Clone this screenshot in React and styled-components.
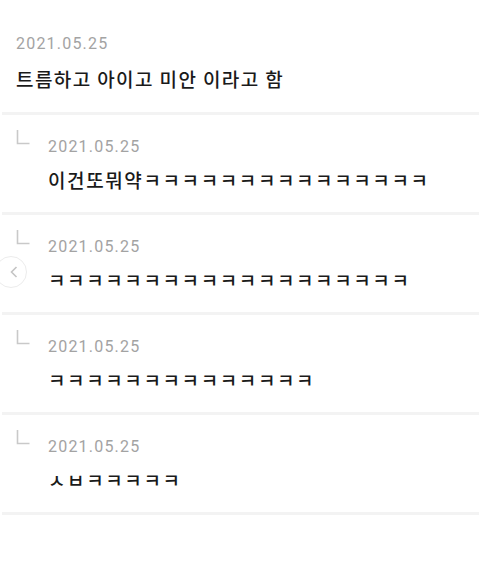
import React from 'react'
import styled, { createGlobalStyle } from 'styled-components'

const Global = createGlobalStyle`
  html, body {
    margin: 0;
    padding: 0;
    background: #ffffff;
  }
  body {
    font-family: "Noto Sans CJK KR", "Noto Sans", sans-serif;
  }
`

const Page = styled.div`
  position: relative;
  width: 479px;
  min-height: 587px;
  background: #fff;
  overflow: hidden;
`

const Comment = styled.div`
  padding: 34px 16px 20px 16px;
  display: flex;
  flex-direction: column;
  gap: 12px;
`

const Date = styled.div`
  font-family: Roboto, "Liberation Sans", sans-serif;
  font-size: 16px;
  line-height: 20px;
  letter-spacing: 1.2px;
  color: #a3a3a3;
`

const Text = styled.div`
  font-family: "Noto Sans CJK KR", sans-serif;
  font-size: 19px;
  line-height: 26px;
  letter-spacing: ${p => p.$spacing || 1.5}px;
  font-weight: 500;
  color: #1a1a1a;
  white-space: nowrap;
`

const Divider = styled.div`
  height: 3px;
  margin-left: 2px;
  background: #f3f3f3;
`

const Reply = styled.div`
  display: flex;
  padding: 14px 16px 19px 16px;
`

const Corner = styled.svg`
  flex: none;
  width: 14px;
  height: 16px;
  margin-right: 18px;
`

const Body = styled.div`
  display: flex;
  flex-direction: column;
  gap: 10px;
  padding-top: 8px;
`

const BackButton = styled.div`
  position: absolute;
  left: -5px;
  top: 256px;
  width: 32px;
  height: 32px;
  border-radius: 50%;
  background: #fff;
  border: 1.5px solid #ececec;
  display: flex;
  align-items: center;
  justify-content: center;
  padding-left: 6px;
  box-sizing: border-box;
`

const replies = [
  '이건또뭐약ㅋㅋㅋㅋㅋㅋㅋㅋㅋㅋㅋㅋㅋㅋㅋ',
  'ㅋㅋㅋㅋㅋㅋㅋㅋㅋㅋㅋㅋㅋㅋㅋㅋㅋㅋㅋ',
  'ㅋㅋㅋㅋㅋㅋㅋㅋㅋㅋㅋㅋㅋㅋ',
  'ㅅㅂㅋㅋㅋㅋㅋ',
]

const App = () => {
  return (
    <Page>
      <Global />
      <Comment>
        <Date>2021.05.25</Date>
        <Text $spacing={1.4}>트름하고 아이고 미안 이라고 함</Text>
      </Comment>
      <Divider />
      {replies.map((r, i) => (
        <React.Fragment key={i}>
          <Reply>
            <Corner viewBox="0 0 14 16">
              <path d="M1.5 1 V14.5 H13.5" fill="none" stroke="#c9c9c9" strokeWidth="1.6" />
            </Corner>
            <Body>
              <Date>2021.05.25</Date>
              <Text $spacing={1.6}>{r}</Text>
            </Body>
          </Reply>
          <Divider />
        </React.Fragment>
      ))}
      <BackButton>
        <svg width="8" height="12" viewBox="0 0 8 12">
          <path d="M6.5 1 L1.5 6 L6.5 11" fill="none" stroke="#c4c4c4" strokeWidth="1.6" />
        </svg>
      </BackButton>
    </Page>
  )
}

export default App
